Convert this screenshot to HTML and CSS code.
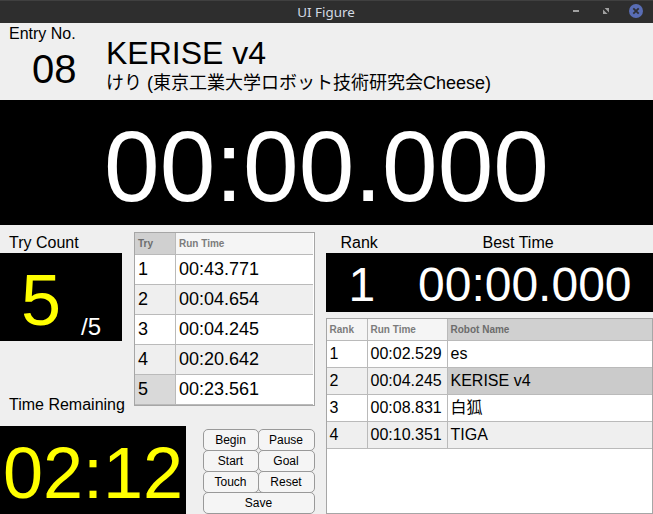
FILE: index.html
```html
<!DOCTYPE html>
<html lang="ja">
<head>
<meta charset="utf-8">
<title>UI Figure</title>
<link rel="stylesheet" href="styles.css">
</head>
<body>
<header class="titlebar">
  <span class="title">UI Figure</span>
  <svg class="controls" width="80" height="23" viewBox="0 0 80 23">
    <path d="M0 10h6v2H0z" fill="#a0a0a0"/>
    <path d="M31.6 8H36v4.6zM30 9.6V14h4.6z" fill="#a0a0a0"/>
    <circle cx="63" cy="11" r="7" fill="#596db5"/>
    <path d="M60.3 8.3l5.4 5.4M65.7 8.3l-5.4 5.4" stroke="#2e3036" stroke-width="1.8"/>
  </svg>
</header>
<section class="entry">
  <div class="entry-no">
    <div class="label">Entry No.</div>
    <div class="number">08</div>
  </div>
  <div class="robot">
    <div class="robot-name">KERISE v4</div>
    <div class="team">けり (東京工業大学ロボット技術研究会Cheese)</div>
  </div>
</section>
<section class="timer">00:00.000</section>
<main class="panels">
  <div class="left">
    <div class="tries">
      <div class="try-side">
        <div class="label">Try Count</div>
        <div class="try-box"><span class="current">5</span><span class="total">/5</span></div>
        <div class="label remaining-label">Time Remaining</div>
      </div>
      <div class="table try-table">
        <div class="row head"><span class="selected">Try</span><span>Run Time</span></div>
        <div class="row"><span>1</span><span>00:43.771</span></div>
        <div class="row"><span>2</span><span>00:04.654</span></div>
        <div class="row"><span>3</span><span>00:04.245</span></div>
        <div class="row"><span>4</span><span>00:20.642</span></div>
        <div class="row"><span class="picked">5</span><span>00:23.561</span></div>
      </div>
    </div>
    <div class="bottom">
      <div class="remaining">02:12</div>
      <div class="buttons">
        <button>Begin</button><button>Pause</button>
        <button>Start</button><button>Goal</button>
        <button>Touch</button><button>Reset</button>
        <button class="wide">Save</button>
      </div>
    </div>
  </div>
  <div class="right">
    <div class="best-labels"><span class="label">Rank</span><span class="label">Best Time</span></div>
    <div class="best"><span>1</span><span>00:00.000</span></div>
    <div class="table rank-table">
      <div class="row head"><span>Rank</span><span>Run Time</span><span class="selected">Robot Name</span></div>
      <div class="row"><span>1</span><span>00:02.529</span><span>es</span></div>
      <div class="row"><span>2</span><span>00:04.245</span><span class="active">KERISE v4</span></div>
      <div class="row"><span>3</span><span>00:08.831</span><span>白狐</span></div>
      <div class="row"><span>4</span><span>00:10.351</span><span>TIGA</span></div>
    </div>
  </div>
</main>
</body>
</html>
```
FILE: styles.css
```css
* { box-sizing: border-box; }
body {
  margin: 0;
  width: 653px;
  height: 514px;
  overflow: hidden;
  background: #efefef;
  color: #000;
  font-family: "Liberation Sans", "Noto Sans CJK JP", sans-serif;
  display: flex;
  flex-direction: column;
  white-space: nowrap;
}
.titlebar {
  height: 23px;
  flex: none;
  background: #2e2e2e;
  border-top: 1px solid #404040;
  display: grid;
  grid-template-columns: 1fr auto 1fr;
}
.title {
  grid-column: 2;
  color: #d3dae3;
  font: 13.4px/23px "Noto Sans", sans-serif;
  margin-right: 1px;
}
.controls { grid-column: 3; justify-self: end; margin-top: -1px; }
.label { font-size: 16px; line-height: 20px; }
.entry { height: 77px; flex: none; display: flex; padding-top: 1px; }
.entry-no { width: 106px; padding-left: 9px; }
.number { font-size: 40px; line-height: 50px; padding-left: 23px; }
.robot { padding-top: 10px; }
.robot-name { font-size: 32px; line-height: 38px; }
.team { font-size: 18px; line-height: 22px; }
.timer {
  height: 125px;
  flex: none;
  background: #000;
  color: #fff;
  font-size: 100px;
  line-height: 132px;
  text-align: center;
}
.panels { height: 289px; flex: none; display: grid; grid-template-columns: 326px 327px; }
.left { display: flex; flex-direction: column; justify-content: space-between; }
.tries { display: flex; gap: 12px; padding-top: 7px; }
.try-side { width: 122px; padding-top: 1px; }
.try-side .label { padding-left: 9px; }
.try-box {
  height: 88px;
  overflow: hidden;
  background: #000;
  display: flex;
  padding-left: 21px;
}
.current { color: #ff0; font-size: 72px; line-height: 94px; width: 60px; }
.total { color: #fff; font-size: 24px; line-height: 147px; }
.try-side .remaining-label { margin-top: 54px; }
.table { background: #fff; border: 1px solid #a6a6a6; }
.row { display: grid; border-bottom: 1px solid #bababa; }
.row span { padding-left: 3px; border-left: 1px solid #bababa; }
.row span:first-child { border-left: 0; }
.row:nth-child(odd) { background: #efefef; }
.row.head {
  height: 22px;
  background: #f5f5f5;
  color: #7c7c7c;
  font: bold 10px/21px "Liberation Sans", sans-serif;
}
.row .selected { background: #d0d0d0; color: #6c6c6c; }
.row .picked { background: #d9d9d9; }
.row .active { background: #cbcbcb; }
.try-table { width: 181px; height: 174px; padding-right: 1px; }
.try-table .row { grid-template-columns: 40px 1fr; }
.try-table .row:not(.head) { height: 30px; font-size: 18px; line-height: 28px; }
.try-table .row:last-child { background: #fff; }
.row:nth-child(even) { background: #fff; }
.bottom { display: flex; align-items: flex-end; gap: 17px; }
.remaining {
  width: 186px;
  height: 88px;
  background: #000;
  color: #ff0;
  font-size: 72px;
  line-height: 94px;
  text-align: center;
}
.buttons { display: grid; grid-template-columns: 55px 57px; grid-auto-rows: 21px; padding-bottom: 1px; }
button {
  height: 22px;
  margin: 0;
  padding: 0 1px 0 0;
  border: 1px solid #999;
  border-radius: 5px;
  background: #f5f5f5;
  color: #000;
  font: 12px/20px "Liberation Sans", sans-serif;
}
button:nth-child(odd):not(.wide) { margin-right: -1px; }
.wide { grid-column: 1 / 3; }
.try-table .row:nth-child(2), .try-table .row:nth-child(4) { background: #fff; }
.try-table .row:nth-child(6) { background: #fff; }
.right { display: flex; flex-direction: column; }
.best-labels { height: 28px; padding-top: 8px; display: flex; padding-left: 14.5px; }
.best-labels .label:first-child { width: 142px; }
.best {
  height: 59px;
  background: #000;
  color: #fff;
  font-size: 48px;
  line-height: 63px;
  display: grid;
  grid-template-columns: 69.5px auto;
  padding-left: 22.5px;
}
.rank-table { height: 196px; margin-top: 6px; }
.rank-table .row { grid-template-columns: 40px 80px 1fr; }
.rank-table .row span { padding-left: 2.5px; }
.rank-table .row:not(.head) { height: 27px; font-size: 16px; line-height: 26px; }
```
